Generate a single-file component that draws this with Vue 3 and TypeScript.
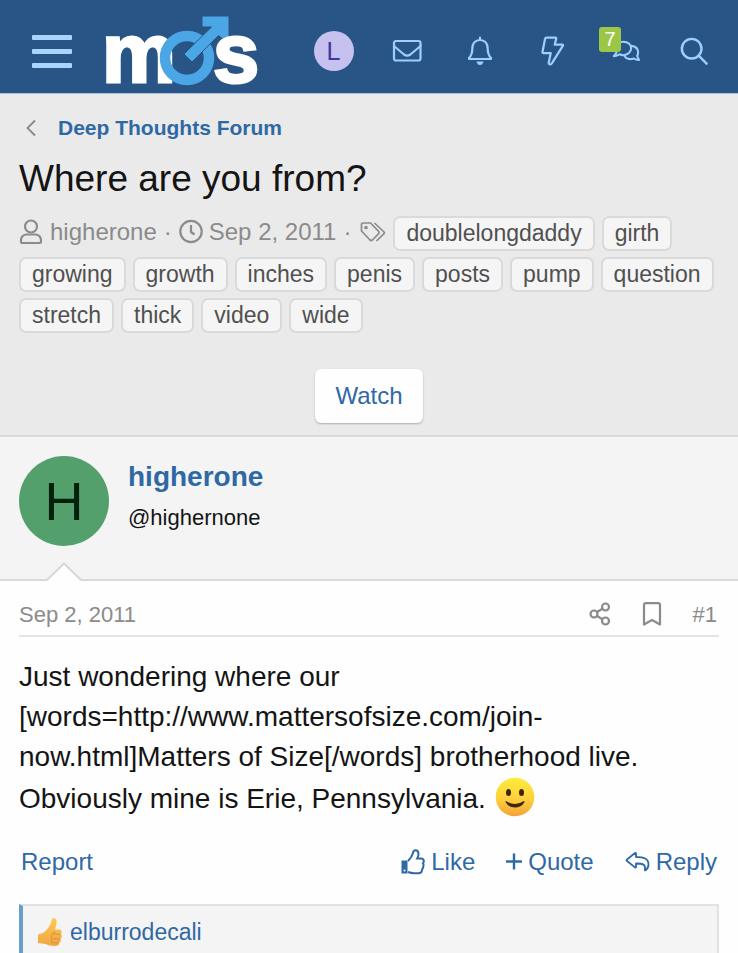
<script setup lang="ts">
interface Post {
  author: string
  handle: string
  date: string
  number: number
  likedBy: string
}

const tags: string[] = [
  'doublelongdaddy', 'girth', 'growing', 'growth', 'inches', 'penis', 'posts',
  'pump', 'question', 'stretch', 'thick', 'video', 'wide',
]

const post: Post = {
  author: 'higherone',
  handle: '@highernone',
  date: 'Sep 2, 2011',
  number: 1,
  likedBy: 'elburrodecali',
}

const unreadChats = 7
</script>

<template>
  <div class="page">
    <header class="bar">
      <button class="menu" type="button" aria-label="Menu">
        <span></span><span></span><span></span>
      </button>
      <a class="logo" href="#" aria-label="MOS">
        <svg width="156" height="93" viewBox="0 -15 156 93">
          <text class="logo-letter" x="-3" y="67">m</text>
          <circle cx="82" cy="43" r="22" fill="none" stroke="#4ba6e6" stroke-width="10.500" />
          <path d="M97 1h27v28l-10.500-8.500L87 47l-8-8 27.500-27H97z" fill="#4ba6e6" stroke="#285585" stroke-width="1" />
          <text class="logo-letter" x="108" y="67">s</text>
        </svg>
      </a>
      <nav class="tools">
        <a class="tool" href="#" aria-label="Account"><span class="me">L</span></a>
        <a class="tool" href="#" aria-label="Messages">
          <svg width="30" height="24" viewBox="0 0 30 24" class="line">
            <rect x="2" y="2" width="26.500" height="19.500" rx="2" />
            <path d="M2 7l10 8.500q3.200 2.400 6.400 0L28.500 7" />
          </svg>
        </a>
        <a class="tool" href="#" aria-label="Alerts">
          <svg width="26" height="30" viewBox="0 0 26 30" class="line">
            <path d="M13 1.500v2.500M13 4c-5 0-7.700 3.500-7.700 8.500 0 5.500-1.300 7.500-3.300 9.500v1h22v-1c-2-2-3.300-4-3.300-9.500C20.700 7.500 18 4 13 4z" />
            <path d="M9.500 25.500h7q-1 3.500-3.500 3.500t-3.500-3.500z" fill="#9dd0fb" stroke="none" />
          </svg>
        </a>
        <a class="tool" href="#" aria-label="Latest activity">
          <svg width="24" height="30" viewBox="0 0 24 30" class="line">
            <path d="M5.500 1.700h9q1 0 .7 1l-1.500 6h7.500q1.200 0 .6 1.200L11 27.200q-1 1.500-2.500 1-1-.4-.8-1.500l2-9.500H2.500q-1.200 0-1-1.200L4 3q.2-1.300 1.500-1.300z" />
          </svg>
        </a>
        <a class="tool" href="#" aria-label="Chats">
          <svg width="28" height="24" viewBox="0 0 30 24" class="line">
            <path d="M12 2c5 0 8.500 3 8.500 7s-3.500 7.500-8.500 7.500q-2 0-4-1-2.500 2-6 2 2.500-2 3-5Q3.500 11 3.500 9c0-4 3.500-7 8.500-7z" />
            <path d="M20.500 6.500c4.500.5 7.500 3 7.500 7q0 2-1 3.500.500 2.500 2 4.500-3.500 0-5.500-1.500c-5 1.500-9 0-10.500-3.500" />
          </svg>
          <span class="badge">{{ unreadChats }}</span>
        </a>
        <a class="tool search" href="#" aria-label="Search">
          <svg width="28" height="28" viewBox="0 0 30 30" class="line thick">
            <circle cx="12.500" cy="12.500" r="10.500" />
            <path d="M20 20l8.500 8.500" />
          </svg>
        </a>
      </nav>
    </header>

    <section class="intro">
      <a class="crumb" href="#">
        <svg width="12" height="18" viewBox="0 0 12 18"><path d="M10 1.500L2.500 9l7.500 7.500" fill="none" stroke="#888" stroke-width="1.800" /></svg>
        <span>Deep Thoughts Forum</span>
      </a>
      <h1>Where are you from?</h1>
      <div class="meta">
        <div class="facts">
          <svg width="24" height="26" viewBox="0 0 24 26" class="grey">
            <circle cx="12" cy="7.500" r="6" />
            <path d="M7 15.500h10q5 1 5 6v1.200q0 1.300-1.300 1.300H3.300Q2 24 2 22.700v-1.200q0-5 5-6z" />
          </svg>
          <a class="who" href="#">higherone</a>
          <span class="dot">·</span>
          <svg width="24" height="26" viewBox="0 0 24 26" class="grey">
            <circle cx="12" cy="12.500" r="10.700" />
            <path d="M12 6v7l3.500 2.500" />
          </svg>
          <time class="when" datetime="2011-09-02">{{ post.date }}</time>
          <span class="dot">·</span>
          <svg width="26" height="22" viewBox="0 0 26 22" class="grey thin tagicon">
            <path d="M1.500 3v7l8.500 9q1.200 1 2.400 0l6.300-6.300q1-1.200 0-2.400L10.500 2H3Q1.500 2 1.500 3z" />
            <path d="M14.500 2l9.500 9q.800.800 0 1.600L16.500 20" />
            <circle cx="6" cy="6.500" r="1" />
          </svg>
        </div>
        <a v-for="tag in tags" :key="tag" class="tag" href="#">{{ tag }}</a>
      </div>
      <button class="watch" type="button">Watch</button>
    </section>

    <article>
      <div class="user">
        <a class="avatar" href="#" aria-label="higherone profile">H</a>
        <div>
          <a class="name" href="#">{{ post.author }}</a>
          <div class="handle">{{ post.handle }}</div>
        </div>
        <svg class="notch" width="36" height="19" viewBox="0 0 36 19">
          <path d="M1 18L18 1l17 17v1H1z" fill="#fefefe" />
          <path d="M0 18h1L18 1.500 35 18h1" fill="none" stroke="#d8d8d8" stroke-width="2" />
        </svg>
      </div>

      <div class="content">
        <div class="posthead">
          <time datetime="2011-09-02">{{ post.date }}</time>
          <a class="share" href="#" aria-label="Share">
            <svg width="22" height="26" viewBox="0 0 22 26" class="grey">
              <circle cx="5" cy="13" r="3.500" /><circle cx="16.500" cy="6" r="3.500" /><circle cx="16.500" cy="20" r="3.500" />
              <path d="M8 11l5.500-3.200M8 15l5.500 3.200" />
            </svg>
          </a>
          <a class="mark" href="#" aria-label="Bookmark">
            <svg width="20" height="26" viewBox="0 0 20 26" class="grey">
              <path d="M2 23.500V4q0-1.800 1.800-1.800h12.400Q18 2.200 18 4v19.500L10 19z" />
            </svg>
          </a>
          <a class="num" href="#">#{{ post.number }}</a>
        </div>

        <p class="body">
          Just wondering where our [words=http://www.mattersofsize.com/join-now.html]Matters of Size[/words] brotherhood live.<br>
          <span class="lastline">Obviously mine is Erie, Pennsylvania.
            <svg class="smile" width="40" height="40" viewBox="0 0 40 40" role="img" aria-label="Smile">
              <defs>
                <linearGradient id="face" x1="0" y1="0" x2="0" y2="1">
                  <stop offset="0" stop-color="#fdec3b" /><stop offset=".55" stop-color="#fdd13b" /><stop offset="1" stop-color="#f5a13a" />
                </linearGradient>
              </defs>
              <circle cx="20" cy="20" r="19.300" fill="url(#face)" />
              <ellipse cx="13.500" cy="15.500" rx="2.500" ry="3.500" fill="#402508" />
              <ellipse cx="26.500" cy="15.500" rx="2.500" ry="3.500" fill="#402508" />
              <path d="M11 24q9 6 18 0 .8.300.2 1.500-3 5-9.200 5t-9.200-5Q10.300 24.300 11 24z" fill="#402508" />
            </svg>
          </span>
        </p>

        <div class="actions">
          <a class="report" href="#">Report</a>
          <button type="button" class="like">
            <svg width="24" height="26" viewBox="0 0 24 26">
              <path d="M0.500 11.500h6V24.500H.5z" fill="#2f69a5" />
              <path d="M7 12q4-4 5-8 .300-2.700 2.500-2.700 3 0 3 3.700 0 2-1.300 4.500h4.300q2.300.300 2.300 2.800 0 1.200-.8 2 1 1.200.200 3.200.200 1.500-1 2.700 0 4-4 4h-4Q10 24.200 7 23" fill="none" stroke="#2f69a5" stroke-width="2" />
              <circle cx="3.500" cy="21.500" r="1" fill="#fff" />
            </svg>
            Like
          </button>
          <button type="button" class="quote">
            <svg width="16" height="20" viewBox="0 0 16 20"><path d="M8 1.500v16M0 9.500h16" stroke="#2f69a5" stroke-width="2.400" /></svg>
            Quote
          </button>
          <button type="button" class="reply">
            <svg width="25" height="22" viewBox="0 0 25 22">
              <path d="M2 8.500L10 2q1-.5 1 .7V6c8 0 12.500 1.500 12.500 7.500q0 3.700-3 5.700-1 .5-.7-.7c1-4.500-1-6-8.800-6v3.300q0 1.300-1 .6L2 10q-1-.700 0-1.500z" fill="none" stroke="#2f69a5" stroke-width="1.800" stroke-linejoin="round" />
            </svg>
            Reply
          </button>
        </div>

        <div class="reactions">
          <svg width="26" height="30" viewBox="0 0 26 30" role="img" aria-label="Like">
            <defs>
              <linearGradient id="hand" x1="0" y1="0" x2="0" y2="1">
                <stop offset="0" stop-color="#fccb52" /><stop offset="1" stop-color="#f0a643" />
              </linearGradient>
            </defs>
            <path d="M1 17.500l5-1.500c4-3 7-6.500 8.500-12.500Q15 .7 17 1q3.500.800 2.300 6.500L18 12.500h4.500q2.500.500 2.200 2.700-.200 1.500-1.200 1.800 1.800 1 1.300 3-.400 1.500-1.600 1.700 1.200 1 .6 2.600-.5 1.300-1.800 1.300.8 2.700-2.500 3.200-6 .700-11-1.800L1 26z" fill="url(#hand)" />
            <path d="M15 17q1-2 3.500-2M16 17.200h7.500M16 21.800h7M16.500 25.700h5.500M15 17q-1.500 1 0 3-1.500 2 0 3.500-.500 2 1 3" fill="none" stroke="#d98f35" stroke-width="1" />
          </svg>
          <a href="#">{{ post.likedBy }}</a>
        </div>
      </div>
    </article>
  </div>
</template>

<style>
body {
  margin: 0;
  background: #fefefe;
}
</style>

<style scoped>
.page {
  font-family: "Liberation Sans", Arial, Helvetica, sans-serif;
  color: #141414;
}
a {
  color: #2f69a5;
  text-decoration: none;
}
button {
  font: inherit;
  color: #2f69a5;
  background: none;
  border: 0;
  padding: 0;
  cursor: pointer;
}
svg {
  display: block;
  flex: none;
}
.bar {
  display: flex;
  align-items: center;
  height: 93px;
  padding: 0 12px 0 32px;
  background: #285585;
  border-bottom: 1px solid #a9bfd8;
}
.menu {
  display: flex;
  flex-direction: column;
  gap: 9px;
  width: 40px;
  margin: 10px 33px 0 0;
}
.menu span {
  height: 5px;
  border-radius: 1px;
  background: #a9d4ff;
}
.logo svg {
  overflow: visible;
}
.logo-letter {
  font-family: "Liberation Sans Narrow", "Liberation Sans", sans-serif;
  font-size: 83px;
  font-weight: 700;
  fill: #fff;
  stroke: #fff;
  stroke-width: 3px;
}
.tools {
  display: flex;
  align-items: center;
  margin: 9px 0 0 auto;
}
.tool {
  position: relative;
  display: flex;
  justify-content: center;
  width: 73px;
}
.search {
  width: 64px;
}
.line {
  fill: none;
  stroke: #9dd0fb;
  stroke-width: 2.2;
  stroke-linejoin: round;
  stroke-linecap: round;
}
.thick {
  stroke-width: 2.6;
}
.me {
  width: 40px;
  border-radius: 50%;
  background: #c6c1ee;
  color: #4335a0;
  font-size: 25px;
  line-height: 40px;
  text-align: center;
}
.badge {
  position: absolute;
  left: 10px;
  top: -12px;
  width: 22px;
  border-radius: 3px;
  background: #9cc746;
  color: #fff;
  font-size: 20px;
  line-height: 25px;
  text-align: center;
}
.intro {
  padding: 20px 19px 12px;
  background: #eaeaea;
  border-bottom: 2px solid #dadada;
}
.crumb {
  display: flex;
  align-items: center;
  gap: 21px;
  padding-left: 6px;
  font-size: 21px;
  font-weight: 700;
  line-height: 28px;
}
h1 {
  margin: 14px 0;
  font-size: 37px;
  font-weight: 400;
  line-height: 46px;
}
.meta {
  display: flex;
  flex-wrap: wrap;
  gap: 6px 7px;
}
.facts {
  display: flex;
  align-items: center;
  color: #8b8b8b;
  font-size: 24px;
  line-height: 30px;
  padding-bottom: 4px;
}
.who {
  margin-left: 7px;
  color: inherit;
}
.dot {
  width: 22px;
  text-align: center;
}
.when {
  margin-left: 6px;
}
.grey {
  fill: none;
  stroke: #8b8b8b;
  stroke-width: 2.2;
  stroke-linejoin: round;
}
.thin {
  stroke-width: 1.7;
}
.tagicon {
  margin-left: 2px;
}
.tag {
  box-sizing: border-box;
  padding: 0 11px;
  border: 2px solid #dadada;
  border-radius: 7px;
  background: #f5f5f5;
  color: #505050;
  font-size: 23px;
  line-height: 31px;
}
.watch {
  display: block;
  margin: 36px auto 0;
  padding: 0 20px;
  border-radius: 6px;
  background: #fefefe;
  box-shadow: 0 1px 2px #aaa;
  font-size: 24px;
  line-height: 54px;
}
.user {
  position: relative;
  display: flex;
  gap: 19px;
  padding: 19px 19px 33px;
  background: #f4f4f4;
  border-bottom: 2px solid #d8d8d8;
}
.avatar {
  width: 90px;
  border-radius: 50%;
  background: #53a06c;
  color: #02200b;
  font-size: 54px;
  line-height: 90px;
  text-align: center;
}
.name {
  display: block;
  font-size: 28px;
  font-weight: 700;
  line-height: 42px;
}
.handle {
  font-size: 22px;
  line-height: 40px;
}
.notch {
  position: absolute;
  left: 46px;
  bottom: -2px;
}
.content {
  padding: 0 19px;
}
.posthead {
  display: flex;
  align-items: center;
  height: 54px;
  padding: 0 2px 0 0;
  border-bottom: 2px solid #e4e4e4;
  color: #8b8b8b;
  font-size: 22px;
  line-height: 28px;
}
.posthead .num {
  padding-top: 14px;
  color: inherit;
}
.posthead time {
  margin-right: auto;
  padding-top: 14px;
}
.share,
.mark {
  padding-top: 12px;
  margin-right: 31px;
}
.body {
  margin: 20px 0 0;
  font-size: 28px;
  line-height: 40px;
}
.lastline {
  display: flex;
  align-items: center;
  gap: 9px;
}
.smile {
  margin-bottom: 4px;
}
.actions {
  display: flex;
  align-items: center;
  gap: 31px;
  margin: 25px 2px 26px;
  font-size: 24px;
  line-height: 32px;
}
.report {
  margin-right: auto;
}
.actions button {
  display: flex;
  align-items: center;
  gap: 6px;
}
.reactions {
  display: flex;
  align-items: center;
  gap: 7px;
  min-height: 48px;
  padding: 2px 14px 0;
  background: #f4f4f4;
  border: 2px solid #e2e2e2;
  border-left: 4px solid #6b9fcb;
  border-bottom: 0;
  font-size: 23px;
  line-height: 32px;
}
</style>
